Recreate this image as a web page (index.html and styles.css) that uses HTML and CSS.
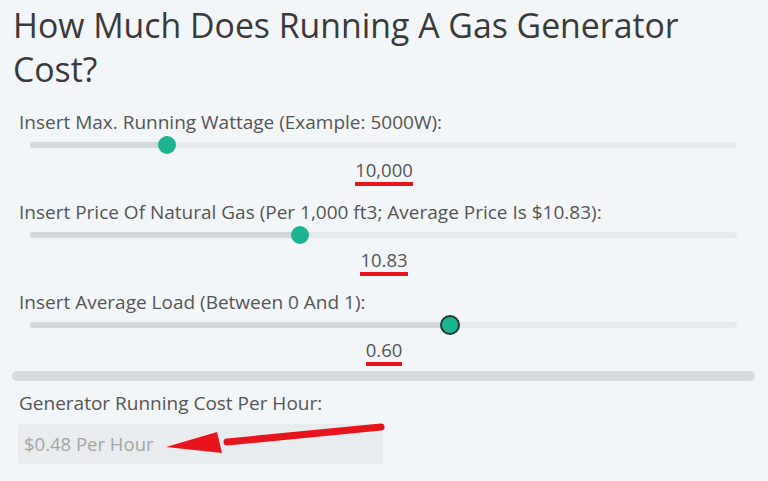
FILE: index.html
```html
<!DOCTYPE html>
<html>
<head>
<meta charset="utf-8">
<link rel="stylesheet" href="styles.css">
</head>
<body>
<div class="page">
  <h1 class="title">How Much Does Running A Gas Generator Cost?</h1>

  <div class="field">
    <div class="label">Insert Max. Running Wattage (Example: 5000W):</div>
    <div class="slider"><div class="track"><div class="fill" style="width:19.4%"></div><div class="thumb" style="left:19.4%"></div></div></div>
    <div class="value"><span class="num">10,000</span></div>
  </div>

  <div class="field">
    <div class="label">Insert Price Of Natural Gas (Per 1,000 ft3; Average Price Is $10.83):</div>
    <div class="slider"><div class="track"><div class="fill" style="width:38.2%"></div><div class="thumb" style="left:38.2%"></div></div></div>
    <div class="value"><span class="num">10.83</span></div>
  </div>

  <div class="field">
    <div class="label">Insert Average Load (Between 0 And 1):</div>
    <div class="slider"><div class="track"><div class="fill" style="width:59.4%"></div><div class="thumb focused" style="left:59.4%"></div></div></div>
    <div class="value"><span class="num">0.60</span></div>
  </div>

  <div class="divider"></div>

  <div class="result">
    <div class="label">Generator Running Cost Per Hour:</div>
    <div class="output-wrap">
      <div class="output">$0.48 Per Hour</div>
      <svg class="arrow" width="240" height="50" viewBox="0 0 240 50">
        <line x1="214" y1="3" x2="60" y2="18" stroke="#e8141c" stroke-width="7" stroke-linecap="round"/>
        <polygon points="-1,23 50,8 55,29" fill="#e8141c"/>
      </svg>
    </div>
  </div>
</div>
</body>
</html>
```

FILE: styles.css
```css
html, body {
  margin: 0;
  padding: 0;
  background: #f3f6f8;
}
body {
  font-family: "Open Sans", "Noto Sans", sans-serif;
  color: #555;
}
.page {
  width: 768px;
  height: 481px;
  overflow: hidden;
  padding-top: 3px;
  box-sizing: border-box;
}
.title {
  margin: 0;
  padding: 0 60px 0 13px;
  font-size: 33.8px;
  font-weight: 400;
  line-height: 44px;
  color: #3a3a3a;
}
.field:first-of-type {
  margin-top: 18px;
}
.field + .field {
  margin-top: 13px;
}
.label {
  padding-left: 19px;
  font-size: 19px;
  line-height: 26px;
  color: #555;
}
.slider {
  height: 20px;
  padding: 0 31px 0 30px;
  display: flex;
  align-items: center;
}
.track {
  position: relative;
  flex: 1;
  height: 6px;
  border-radius: 3px;
  background: #e6eaed;
}
.fill {
  height: 100%;
  border-radius: 3px;
  background: #d4d8db;
}
.thumb {
  position: absolute;
  top: 50%;
  width: 18px;
  height: 18px;
  margin: -9px 0 0 -9px;
  border-radius: 50%;
  background: #1db591;
  box-sizing: border-box;
}
.thumb.focused {
  border: 2px solid #1c3a33;
  width: 20px;
  height: 20px;
  margin: -10px 0 0 -10px;
}
.value {
  margin-top: 3px;
  text-align: center;
  font-size: 18.5px;
  line-height: 24px;
}
.num {
  display: inline-block;
  border-bottom: 4px solid #e8141c;
  color: #555;
}
.divider {
  margin: 5px 13px 0 12px;
  height: 10px;
  border-radius: 5px;
  background: #d5dadd;
}
.result {
  margin-top: 9px;
}
.output-wrap {
  position: relative;
  margin: 8px 0 0 18px;
  width: 365px;
}
.output {
  height: 40px;
  line-height: 40px;
  padding-left: 6px;
  background: #e9ecee;
  border-radius: 2px;
  color: #a3a6a9;
  font-size: 18.5px;
}
.arrow {
  position: absolute;
  left: 149px;
  top: 0;
  overflow: visible;
}
```
